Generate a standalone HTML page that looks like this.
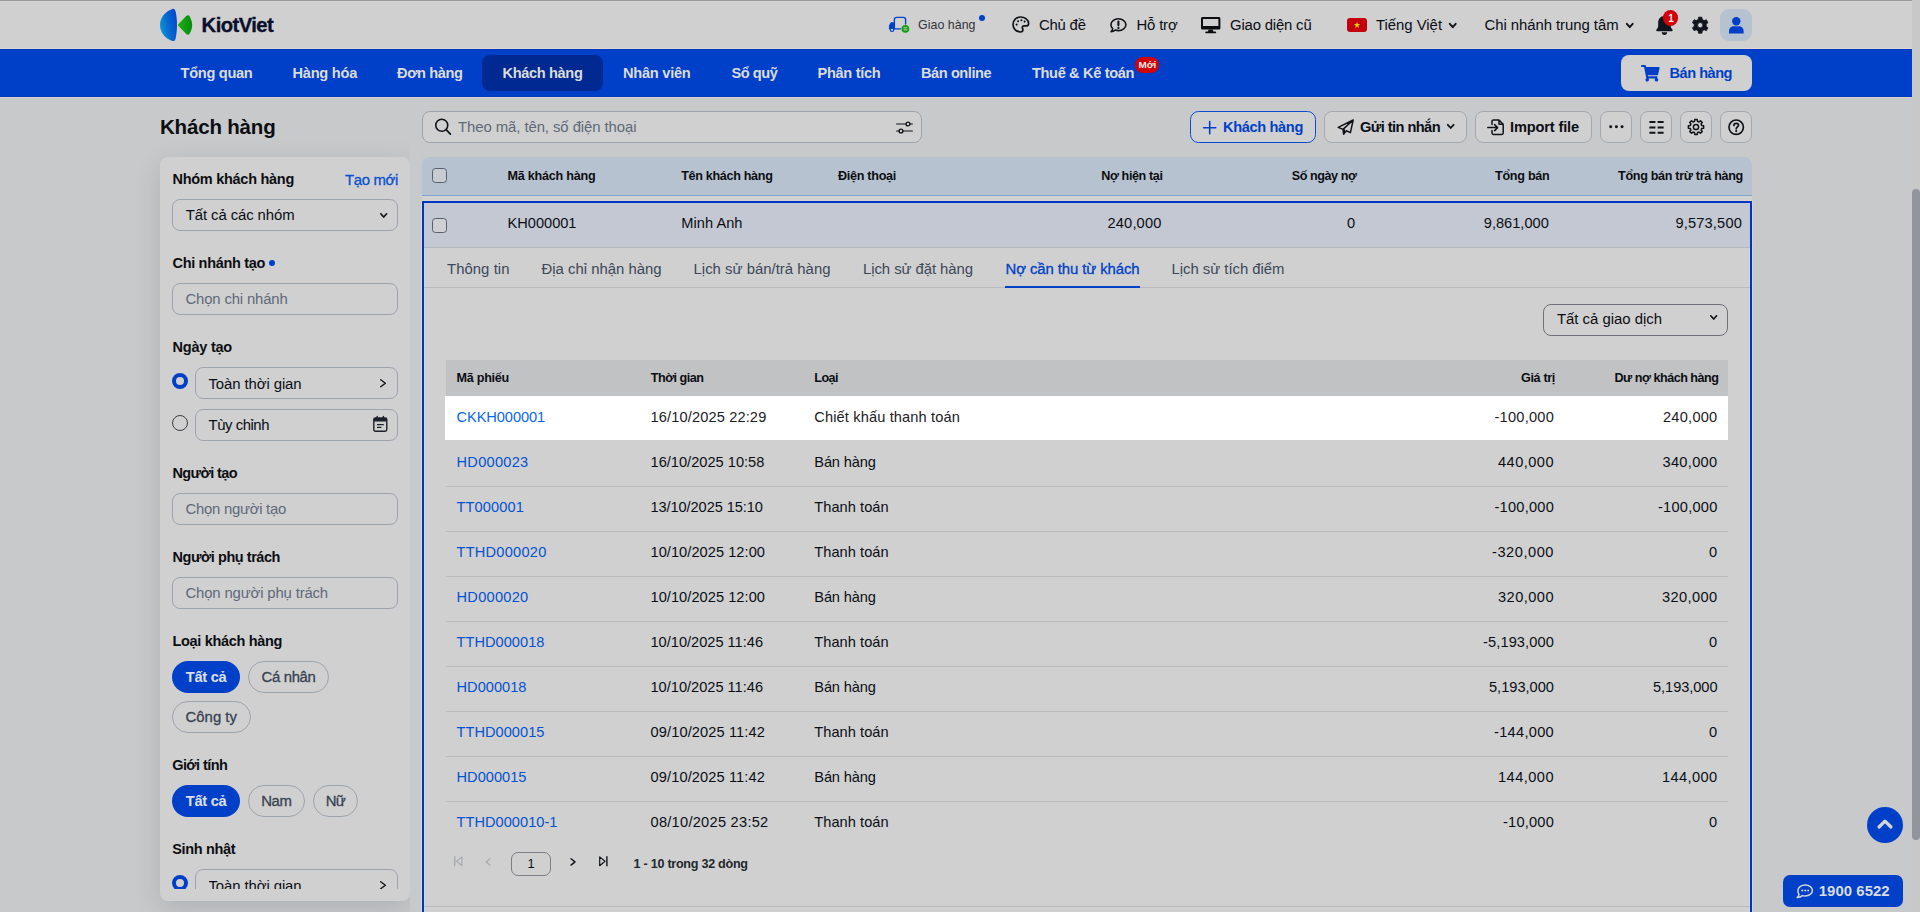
<!DOCTYPE html>
<html lang="vi"><head><meta charset="utf-8"><title>Khách hàng - KiotViet</title>
<style>
*{box-sizing:border-box;margin:0;padding:0}
html,body{width:1920px;height:912px;overflow:hidden;background:#c8c9cb;font-family:"Liberation Sans",sans-serif}
#root{position:relative;width:1920px;height:912px;overflow:hidden}
#root div,#root .t,#root svg{position:absolute}
.t{white-space:nowrap;line-height:20px;height:20px;font-weight:400;text-decoration:none;display:block}
.box{border:1px solid #9ea4ae;border-radius:8px;background:#d0d0d0}
.pill{border:1px solid #9ea4ae;border-radius:16px;background:#d0d0d0}
.pillon{border-radius:16px;background:#0040c8}
.btn{border:1px solid #a5a8ae;border-radius:8px;background:#d0d0d0;top:111px;height:32px}
.ln{height:1px;background:#b8babe}
svg{overflow:visible}

</style></head><body>
<div id="root">
<header>
<div style="left:0;top:0;width:1912px;height:49px;background:#d0d0d0"></div>
<div style="left:0;top:0;width:1920px;height:1px;background:#999b9a"></div>
<div style="left:0;top:1px;width:1912px;height:1px;background:#d4d4d4"></div>
<div style="left:1720px;top:9px;width:32px;height:32px;border-radius:9px;background:#b6c2d0"></div>
<div style="left:1347px;top:18px;width:20px;height:14px;border-radius:3px;background:#c4000f"></div>
<div style="left:979px;top:15px;width:6px;height:6px;border-radius:3px;background:#0040c8"></div>
<svg style="left:160px;top:8px" width="33" height="34" viewBox="0 0 33 34"><defs><linearGradient id="lg1" x1="0" x2="1" y1="0.7" y2="0.3"><stop offset="0" stop-color="#0d98d4"/><stop offset="0.55" stop-color="#0763cf"/><stop offset="1" stop-color="#0348cc"/></linearGradient><linearGradient id="lg2" x1="0" x2="1" y1="0" y2="0"><stop offset="0" stop-color="#1fb00c"/><stop offset="1" stop-color="#078a12"/></linearGradient></defs>
<path d="M12.4,0.9 C14.2,0.4 15.2,1.8 15.6,3.6 C16.6,8 17,12.5 17,17 C17,21.5 16.6,26 15.6,30.4 C15.2,32.2 14.2,33.4 12.4,32.9 C6,31 0,25 0,17 C0,9 6,3 12.4,0.9 Z" fill="url(#lg1)"/>
<path d="M18.5,16 L26.2,8 C27.4,6.8 29,6.9 29.7,8.4 C31.3,11.4 32.2,14.2 32.2,17 C32.2,19.8 31.3,22.6 29.7,25.6 C29,27.1 27.4,27.2 26.2,26 L18.5,18 C17.9,17.4 17.9,16.6 18.5,16 Z" fill="url(#lg2)"/></svg>
<svg style="left:888px;top:16px" width="22" height="18" viewBox="0 0 22 18"><path d="M6.4,12.8 L6.4,3.6 C6.4,2.3 7.3,1.4 8.6,1.4 L15.4,1.4 C16.7,1.4 17.6,2.3 17.6,3.6 L17.6,8" fill="none" stroke="#0040c8" stroke-width="1.35" stroke-linecap="round"/>
<path d="M6.4,12.8 L12.5,12.8" fill="none" stroke="#0040c8" stroke-width="1.35" stroke-linecap="round"/>
<path d="M1.4,13 L1.4,9.8 L2.9,6.8 L6.2,6.8 L6.2,13 Z" fill="#0040c8" stroke="#0040c8" stroke-width="1" stroke-linejoin="round"/>
<circle cx="4" cy="13.8" r="1.7" fill="#d0d0d0" stroke="#0040c8" stroke-width="1.2"/>
<circle cx="17.4" cy="12.8" r="3.9" fill="#11a011"/><path d="M15.5,11.8 h3.8 M15.5,13.8 h3.8" stroke="#d0d0d0" stroke-width="0.9"/></svg>
<svg style="left:1012px;top:15.9px" width="18" height="17" viewBox="0 0 18 17"><path d="M8.6,1 C4.4,1 1,4.4 1,8.5 C1,12.6 4.4,16 8.6,16 C10,16 10.9,15 10.9,13.8 C10.9,12.9 10.3,12.4 10.3,11.6 C10.3,10.6 11.1,9.9 12.1,9.9 L13.9,9.9 C15.6,9.9 16.6,8.9 16.6,7.4 C16.6,3.8 12.9,1 8.6,1 Z" fill="none" stroke="#101318" stroke-width="1.7"/>
<circle cx="4.6" cy="8.6" r="1.05" fill="#101318"/><circle cx="6.1" cy="5.3" r="1.05" fill="#101318"/><circle cx="9.4" cy="4.2" r="1.05" fill="#101318"/><circle cx="12.6" cy="5.6" r="1.05" fill="#101318"/></svg>
<svg style="left:1110px;top:18px" width="17" height="15" viewBox="0 0 17 15"><path d="M8.4,0.8 C12.6,0.8 15.9,3.4 15.9,6.7 C15.9,10 12.6,12.6 8.4,12.6 C7.3,12.6 6.2,12.4 5.2,12.1 C4.2,12.9 2.7,13.6 1,13.7 C1.9,12.8 2.5,11.8 2.7,10.6 C1.5,9.5 0.9,8.2 0.9,6.7 C0.9,3.4 4.2,0.8 8.4,0.8 Z" fill="none" stroke="#101318" stroke-width="1.6" stroke-linejoin="round"/>
<path d="M8.4,3.5 L8.4,7.2" stroke="#101318" stroke-width="2.1" stroke-linecap="round"/><circle cx="8.4" cy="9.9" r="1.15" fill="#101318"/></svg>
<svg style="left:1201px;top:16.7px" width="19.4" height="16.2" viewBox="0 0 19.4 16.2"><path d="M1.6,0 L17.8,0 C18.7,0 19.4,0.7 19.4,1.6 L19.4,11 C19.4,11.9 18.7,12.6 17.8,12.6 L1.6,12.6 C0.7,12.6 0,11.9 0,11 L0,1.6 C0,0.7 0.7,0 1.6,0 Z M2,2 L2,8.9 L17.4,8.9 L17.4,2 Z" fill="#0a0c10" fill-rule="evenodd"/>
<path d="M7.6,12.6 L11.8,12.6 L12.4,14.6 L14.4,14.6 C14.9,14.6 15.2,14.9 15.2,15.4 C15.2,15.9 14.9,16.2 14.4,16.2 L5,16.2 C4.5,16.2 4.2,15.9 4.2,15.4 C4.2,14.9 4.5,14.6 5,14.6 L7,14.6 Z" fill="#0a0c10"/></svg>
<svg style="left:1347px;top:18px" width="20" height="14" viewBox="0 0 20 14"><polygon points="10.00,3.80 10.79,6.11 13.23,6.15 11.28,7.62 12.00,9.95 10.00,8.55 8.00,9.95 8.72,7.62 6.77,6.15 9.21,6.11" fill="#dcd400"/></svg>
<svg style="left:1449.3px;top:22.8px" width="7.5" height="5.2" viewBox="0 0 7.5 5.2"><path d="M0.8,0.8 L3.75,4.2 L6.7,0.8" fill="none" stroke="#101318" stroke-width="1.9" stroke-linecap="round" stroke-linejoin="round"/></svg>
<svg style="left:1626px;top:22.8px" width="7.5" height="5.2" viewBox="0 0 7.5 5.2"><path d="M0.8,0.8 L3.75,4.2 L6.7,0.8" fill="none" stroke="#101318" stroke-width="1.9" stroke-linecap="round" stroke-linejoin="round"/></svg>
<svg style="left:1655.6px;top:15.9px" width="17" height="19.2" viewBox="0 0 17 19.2"><path d="M8.45,0 C4.3,0 2.2,3.2 2.2,7 L2.2,9.5 C2.2,11.5 1.4,12.6 0.5,13.5 C-0.2,14.2 0.3,15.2 1.2,15.2 L15.7,15.2 C16.6,15.2 17.1,14.2 16.4,13.5 C15.5,12.6 14.7,11.5 14.7,9.5 L14.7,7 C14.7,3.2 12.6,0 8.45,0 Z M5.65,16.3 L11.25,16.3 C11.25,17.9 10,19.1 8.45,19.1 C6.9,19.1 5.65,17.9 5.65,16.3 Z" fill="#10151d"/></svg>
<div style="left:1662.7px;top:10.1px;width:15.6px;height:15.6px;border-radius:8px;background:#d20008"></div>
<svg style="left:1691.8px;top:16.8px" width="16.4" height="16.4" viewBox="0 0 16.4 16.4"><path d="M6.25,2.42 L6.50,0.18 L9.90,0.18 L10.15,2.42 L12.23,3.62 L14.29,2.71 L16.00,5.67 L14.18,6.99 L14.18,9.41 L16.00,10.73 L14.29,13.69 L12.23,12.78 L10.15,13.98 L9.90,16.22 L6.50,16.22 L6.25,13.98 L4.17,12.78 L2.11,13.69 L0.40,10.73 L2.22,9.41 L2.22,6.99 L0.40,5.67 L2.11,2.71 L4.17,3.62Z M8.2,5.6 A2.6,2.6 0 1,0 8.2,10.8 A2.6,2.6 0 1,0 8.2,5.6 Z" fill="#10151d" fill-rule="evenodd" stroke="#10151d" stroke-width="0.8" stroke-linejoin="round"/></svg>
<svg style="left:1728.8px;top:16.6px" width="14.6" height="16.6" viewBox="0 0 14.6 16.6"><circle cx="7.3" cy="4.3" r="4.2" fill="#0040c8"/><path d="M0,16.4 L0,14 C0,11.3 2.2,9.3 4.8,9.3 L9.8,9.3 C12.4,9.3 14.6,11.3 14.6,14 L14.6,16.4 Z" fill="#0040c8"/></svg>
<span class="t" style="left:201.60px;top:15.01px;font-size:20.2px;color:#0a0f2c;font-weight:700;-webkit-text-stroke:0.35px #0a0f2c;letter-spacing:-0.538px;">KiotViet</span>
<span class="t" style="left:918.00px;top:15.02px;font-size:12.4px;color:#30343b;letter-spacing:0.035px;">Giao hàng</span>
<span class="t" style="left:1039.00px;top:15.01px;font-size:14.9px;color:#0b0e15;letter-spacing:-0.214px;">Chủ đề</span>
<span class="t" style="left:1136.50px;top:15.01px;font-size:14.9px;color:#0b0e15;letter-spacing:-0.174px;">Hỗ trợ</span>
<span class="t" style="left:1230.00px;top:15.01px;font-size:14.9px;color:#0b0e15;letter-spacing:-0.176px;">Giao diện cũ</span>
<span class="t" style="left:1376.00px;top:15.01px;font-size:14.9px;color:#0b0e15;letter-spacing:-0.023px;">Tiếng Việt</span>
<span class="t" style="left:1484.50px;top:15.01px;font-size:14.9px;color:#0b0e15;letter-spacing:-0.049px;">Chi nhánh trung tâm</span>
<span class="t" style="left:1668.20px;top:9.00px;font-size:10px;color:#ececec;font-weight:700;letter-spacing:-0.763px;">1</span>
</header>
<nav>
<div style="left:0;top:48px;width:1912px;height:1px;background:#dcd9d2"></div>
<div style="left:0;top:49px;width:1912px;height:48px;background:#0040c8;border-top:1px solid #0036c2;border-bottom:1px solid #0036c2"></div>
<div style="left:0;top:97px;width:1912px;height:1px;background:#d6d3cb"></div>
<div style="left:482px;top:55px;width:121px;height:36px;border-radius:8px;background:#002a92"></div>
<div style="left:1621px;top:55px;width:131px;height:36px;border-radius:8px;background:#d0d0d0"></div>
<div style="left:1135px;top:57px;width:24px;height:16px;border-radius:8px;background:#d20004"></div>
<svg style="left:1640.8px;top:64.8px" width="18.6" height="16.5" viewBox="0 0 576 512"><path d="M528.12 301.319l47.273-208C578.806 78.301 567.391 64 551.99 64H159.208l-9.166-44.81C147.758 8.021 137.93 0 126.529 0H24C10.745 0 0 10.745 0 24v16c0 13.255 10.745 24 24 24h69.883l70.248 343.435C147.325 417.1 136 435.222 136 456c0 30.928 25.072 56 56 56s56-25.072 56-56c0-15.674-6.447-29.835-16.824-40h209.647C430.447 426.165 424 440.326 424 456c0 30.928 25.072 56 56 56s56-25.072 56-56c0-22.172-12.888-41.332-31.579-50.405l5.517-24.276c3.413-15.018-8.002-29.319-23.403-29.319H218.117l-6.545-32h293.145c11.206 0 20.92-7.754 23.403-18.681z" fill="#0040c8"/></svg>
<a class="t" style="left:180.50px;top:63.00px;font-size:14.6px;color:#dcdcde;font-weight:700;letter-spacing:-0.286px;">Tổng quan</a>
<a class="t" style="left:292.50px;top:63.00px;font-size:14.6px;color:#dcdcde;font-weight:700;letter-spacing:-0.248px;">Hàng hóa</a>
<a class="t" style="left:397.00px;top:63.00px;font-size:14.6px;color:#dcdcde;font-weight:700;letter-spacing:-0.406px;">Đơn hàng</a>
<a class="t" style="left:502.50px;top:63.00px;font-size:14.6px;color:#dcdcde;font-weight:700;letter-spacing:-0.352px;">Khách hàng</a>
<a class="t" style="left:623.00px;top:63.00px;font-size:14.6px;color:#dcdcde;font-weight:700;letter-spacing:-0.250px;">Nhân viên</a>
<a class="t" style="left:731.50px;top:63.00px;font-size:14.6px;color:#dcdcde;font-weight:700;letter-spacing:-0.443px;">Sổ quỹ</a>
<a class="t" style="left:817.50px;top:63.00px;font-size:14.6px;color:#dcdcde;font-weight:700;letter-spacing:-0.299px;">Phân tích</a>
<a class="t" style="left:921.00px;top:63.00px;font-size:14.6px;color:#dcdcde;font-weight:700;letter-spacing:-0.434px;">Bán online</a>
<a class="t" style="left:1032.00px;top:63.00px;font-size:14.6px;color:#dcdcde;font-weight:700;letter-spacing:-0.359px;">Thuế &amp; Kế toán</a>
<a class="t" style="left:1669.50px;top:63.00px;font-size:14.6px;color:#0040c8;font-weight:700;letter-spacing:-0.498px;">Bán hàng</a>
<a class="t" style="left:1138.60px;top:55.01px;font-size:9.9px;color:#ececec;font-weight:700;letter-spacing:-0.167px;">Mới</a>
</nav>
<section class="toolbar">
<div class="box" style="left:422px;top:111px;width:500px;height:32px;background:#d0d0d0"></div>
<div style="left:1190px;top:111px;width:126px;height:32px;border:1.3px solid #0a4bd2;border-radius:8.5px;background:#d0d0d0"></div>
<div class="btn" style="left:1324px;width:143px"></div>
<div class="btn" style="left:1475px;width:117px"></div>
<div class="btn" style="left:1600px;width:32px"></div>
<div class="btn" style="left:1640px;width:32px"></div>
<div class="btn" style="left:1680px;width:32px"></div>
<div class="btn" style="left:1720px;width:32px"></div>
<svg style="left:434px;top:118px" width="18" height="18" viewBox="0 0 18 18"><circle cx="7.75" cy="7.25" r="6" fill="none" stroke="#101318" stroke-width="1.6"/><path d="M12.1,11.7 L16.4,16.1" stroke="#101318" stroke-width="1.7" stroke-linecap="round"/></svg>
<svg style="left:895.5px;top:120.5px" width="17.5" height="13" viewBox="0 0 17.5 13"><path d="M0.6,3 H10 M14,3 H16.4 M0.6,10 H3 M7,10 H16.4" stroke="#101318" stroke-width="1.15" stroke-linecap="round"/><circle cx="12" cy="3" r="1.9" fill="none" stroke="#101318" stroke-width="1.4"/><circle cx="5" cy="10" r="1.9" fill="none" stroke="#101318" stroke-width="1.4"/></svg>
<svg style="left:1203px;top:120.5px" width="13.4" height="13.4" viewBox="0 0 13.4 13.4"><path d="M6.7,0.6 V12.8 M0.6,6.7 H12.8" stroke="#0040c8" stroke-width="1.6" stroke-linecap="round"/></svg>
<svg style="left:1336.5px;top:118.5px" width="17.5" height="16.5" viewBox="0 0 17.5 16.5"><path d="M16.2,1 L1.2,8.4 L6,10.4 L6.6,15.2 L9.4,11.8 L13.4,13.6 Z M6,10.4 L16.2,1 M6.6,15.2 L7.4,11" fill="none" stroke="#101318" stroke-width="1.5" stroke-linejoin="round" stroke-linecap="round"/></svg>
<svg style="left:1446.5px;top:124.4px" width="7.4" height="5" viewBox="0 0 7.4 5"><path d="M0.8,0.8 L3.7,4 L6.6000000000000005,0.8" fill="none" stroke="#101318" stroke-width="1.8" stroke-linecap="round" stroke-linejoin="round"/></svg>
<svg style="left:1487px;top:118.7px" width="17.5" height="16.5" viewBox="0 0 17.5 16.5"><path d="M5,5.6 V2.4 C5,1.6 5.6,1 6.4,1 H12 L16.2,5.2 V14 C16.2,14.8 15.6,15.4 14.8,15.4 H6.4 C5.6,15.4 5,14.8 5,14 V11.6 M12,1 V5.2 H16.2" fill="none" stroke="#101318" stroke-width="1.5" stroke-linejoin="round" stroke-linecap="round"/><path d="M0.8,8.6 H10.6 M7.6,5.6 L10.6,8.6 L7.6,11.6" fill="none" stroke="#101318" stroke-width="1.5" stroke-linejoin="round" stroke-linecap="round"/></svg>
<svg style="left:1608.6px;top:125.3px" width="15" height="3.4" viewBox="0 0 15 3.4"><circle cx="1.7" cy="1.7" r="1.5" fill="#101318"/><circle cx="7.4" cy="1.7" r="1.5" fill="#101318"/><circle cx="13.1" cy="1.7" r="1.5" fill="#101318"/></svg>
<svg style="left:1648.5px;top:120.6px" width="15" height="12.8" viewBox="0 0 15 12.8"><path d="M0.4,1.1 H6.4 M8.6,1.1 H14.6 M0.4,6.4 H6.4 M8.6,6.4 H14.6 M0.4,11.7 H6.4 M8.6,11.7 H14.6" stroke="#101318" stroke-width="2"/></svg>
<svg style="left:1688px;top:118.7px" width="16" height="16" viewBox="0 0 16 16"><path d="M6.58,2.27 L6.80,0.39 L9.20,0.39 L9.42,2.27 L11.04,2.95 L12.53,1.77 L14.23,3.47 L13.05,4.96 L13.73,6.58 L15.61,6.80 L15.61,9.20 L13.73,9.42 L13.05,11.04 L14.23,12.53 L12.53,14.23 L11.04,13.05 L9.42,13.73 L9.20,15.61 L6.80,15.61 L6.58,13.73 L4.96,13.05 L3.47,14.23 L1.77,12.53 L2.95,11.04 L2.27,9.42 L0.39,9.20 L0.39,6.80 L2.27,6.58 L2.95,4.96 L1.77,3.47 L3.47,1.77 L4.96,2.95Z" fill="none" stroke="#101318" stroke-width="1.5" stroke-linejoin="round"/><circle cx="8" cy="8" r="2.6" fill="none" stroke="#101318" stroke-width="1.5"/></svg>
<svg style="left:1727.6px;top:119px" width="16.4" height="16.4" viewBox="0 0 16.4 16.4"><circle cx="8.2" cy="8.2" r="7.2" fill="none" stroke="#101318" stroke-width="1.7"/><path d="M5.9,6.5 C5.9,5.1 6.9,4.3 8.2,4.3 C9.5,4.3 10.5,5.1 10.5,6.3 C10.5,7.9 8.2,8 8.2,9.8" fill="none" stroke="#101318" stroke-width="1.7" stroke-linecap="round"/><circle cx="8.2" cy="12.1" r="1.05" fill="#101318"/></svg>
<h1 class="t" style="left:160.00px;top:117.01px;font-size:20.5px;color:#0c0e12;font-weight:700;letter-spacing:-0.183px;">Khách hàng</h1>
<span class="t" style="left:458.00px;top:117.01px;font-size:14.9px;color:#5f697a;letter-spacing:-0.073px;">Theo mã, tên, số điện thoại</span>
<span class="t" style="left:1223.00px;top:117.00px;font-size:14.6px;color:#0040c8;font-weight:700;letter-spacing:-0.352px;">Khách hàng</span>
<span class="t" style="left:1360.00px;top:117.00px;font-size:14.6px;color:#0b0e15;font-weight:700;letter-spacing:-0.565px;">Gửi tin nhắn</span>
<span class="t" style="left:1510.00px;top:117.00px;font-size:14.6px;color:#0b0e15;font-weight:700;letter-spacing:-0.141px;">Import file</span>
</section>
<aside>
<div style="left:160px;top:157px;width:250px;height:744px;border-radius:8px;background:#d0d0d0;box-shadow:0 8px 28px rgba(0,0,15,0.125)"></div>
<div class="box" style="left:172px;top:199px;width:226px;height:32px"></div>
<div class="box" style="left:172px;top:283px;width:226px;height:32px"></div>
<div class="box" style="left:195px;top:367px;width:203px;height:32px"></div>
<div class="box" style="left:195px;top:409px;width:203px;height:32px"></div>
<div class="box" style="left:172px;top:493px;width:226px;height:32px"></div>
<div class="box" style="left:172px;top:577px;width:226px;height:32px"></div>
<div class="pillon" style="left:172px;top:661px;width:68px;height:32px"></div>
<div class="pill" style="left:248px;top:661px;width:81px;height:32px"></div>
<div class="pill" style="left:172px;top:701px;width:79px;height:32px"></div>
<div class="pillon" style="left:172px;top:785px;width:68px;height:32px"></div>
<div class="pill" style="left:248px;top:785px;width:57px;height:32px"></div>
<div class="pill" style="left:313px;top:785px;width:45px;height:32px"></div>
<div style="left:172px;top:869px;width:226px;height:20px;overflow:hidden"><div class="box" style="left:23px;top:0;width:203px;height:32px"></div>
<div style="left:0;top:6px;width:16px;height:16px;border-radius:8px;border:4.5px solid #0040c8;background:#d0d0d0"></div></div>
<div style="left:272px;top:260px;width:0;height:0"></div>
<div style="left:269px;top:260px;width:6px;height:6px;border-radius:3px;background:#0040c8"></div>
<div style="left:172px;top:373px;width:16px;height:16px;border-radius:8px;border:4.5px solid #0040c8;background:#d0d0d0"></div>
<div style="left:172px;top:415px;width:16px;height:16px;border-radius:8px;border:1px solid #3c4047;background:#d0d0d0"></div>
<svg style="left:380px;top:212.6px" width="7.4" height="5" viewBox="0 0 7.4 5"><path d="M0.8,0.8 L3.7,4 L6.6000000000000005,0.8" fill="none" stroke="#101318" stroke-width="1.7" stroke-linecap="round" stroke-linejoin="round"/></svg>
<svg style="left:380.2px;top:378.6px" width="6.4" height="8.4" viewBox="0 0 6.4 8.4"><path d="M0.7,0.7 L5.4,4.2 L0.7,7.7" fill="none" stroke="#101318" stroke-width="1.4" stroke-linecap="round" stroke-linejoin="round"/></svg>
<div style="left:378px;top:869px;width:12px;height:20px;overflow:hidden"><svg style="left:2.2px;top:11.6px" width="6.4" height="8.4" viewBox="0 0 6.4 8.4"><path d="M0.7,0.7 L5.4,4.2 L0.7,7.7" fill="none" stroke="#101318" stroke-width="1.4" stroke-linecap="round" stroke-linejoin="round"/></svg></div>
<svg style="left:373px;top:416px" width="14.6" height="16" viewBox="0 0 14.6 16"><rect x="0.8" y="2" width="13" height="13.2" rx="1.6" fill="none" stroke="#1c212a" stroke-width="1.4"/><path d="M0.8,3.6 C0.8,2.7 1.5,2 2.4,2 H12.2 C13.1,2 13.8,2.7 13.8,3.6 V5.6 H0.8 Z" fill="#1c212a"/><path d="M4.2,0.4 V2.4 M10.4,0.4 V2.4" stroke="#1c212a" stroke-width="1.4" stroke-linecap="round"/><path d="M4,8.6 H10.8 M4,11.4 H8.4" stroke="#1c212a" stroke-width="1.3"/></svg>
<label class="t" style="left:172.50px;top:169.01px;font-size:14.5px;color:#0c0e12;font-weight:700;letter-spacing:-0.279px;">Nhóm khách hàng</label>
<a class="t" style="left:345.00px;top:170.01px;font-size:14.9px;color:#0a50d2;-webkit-text-stroke:0.3px #0a50d2;letter-spacing:-0.326px;">Tạo mới</a>
<span class="t" style="left:185.75px;top:205.01px;font-size:14.9px;color:#0b0e15;letter-spacing:-0.089px;">Tất cả các nhóm</span>
<label class="t" style="left:172.50px;top:253.01px;font-size:14.5px;color:#0c0e12;font-weight:700;letter-spacing:-0.321px;">Chi nhánh tạo</label>
<span class="t" style="left:185.50px;top:289.01px;font-size:14.9px;color:#5f697a;letter-spacing:-0.166px;">Chọn chi nhánh</span>
<label class="t" style="left:172.50px;top:337.01px;font-size:14.5px;color:#0c0e12;font-weight:700;letter-spacing:-0.219px;">Ngày tạo</label>
<span class="t" style="left:208.50px;top:374.01px;font-size:14.9px;color:#0b0e15;letter-spacing:-0.087px;">Toàn thời gian</span>
<span class="t" style="left:208.50px;top:415.01px;font-size:14.9px;color:#0b0e15;letter-spacing:-0.451px;">Tùy chỉnh</span>
<label class="t" style="left:172.50px;top:463.01px;font-size:14.5px;color:#0c0e12;font-weight:700;letter-spacing:-0.606px;">Người tạo</label>
<span class="t" style="left:185.50px;top:499.01px;font-size:14.9px;color:#5f697a;letter-spacing:-0.263px;">Chọn người tạo</span>
<label class="t" style="left:172.50px;top:547.01px;font-size:14.5px;color:#0c0e12;font-weight:700;letter-spacing:-0.451px;">Người phụ trách</label>
<span class="t" style="left:185.50px;top:583.01px;font-size:14.9px;color:#5f697a;letter-spacing:-0.153px;">Chọn người phụ trách</span>
<label class="t" style="left:172.50px;top:631.01px;font-size:14.5px;color:#0c0e12;font-weight:700;letter-spacing:-0.328px;">Loại khách hàng</label>
<span class="t" style="left:185.75px;top:667.00px;font-size:14.6px;color:#dde0e8;font-weight:700;letter-spacing:-0.240px;">Tất cả</span>
<span class="t" style="left:261.50px;top:667.01px;font-size:14.9px;color:#384252;-webkit-text-stroke:0.3px #384252;letter-spacing:-0.330px;">Cá nhân</span>
<span class="t" style="left:185.50px;top:707.01px;font-size:14.9px;color:#384252;-webkit-text-stroke:0.3px #384252;letter-spacing:0.025px;">Công ty</span>
<label class="t" style="left:172.20px;top:755.01px;font-size:14.5px;color:#0c0e12;font-weight:700;letter-spacing:-0.572px;">Giới tính</label>
<span class="t" style="left:185.75px;top:791.00px;font-size:14.6px;color:#dde0e8;font-weight:700;letter-spacing:-0.240px;">Tất cả</span>
<span class="t" style="left:261.20px;top:791.01px;font-size:14.9px;color:#384252;-webkit-text-stroke:0.3px #384252;letter-spacing:-0.418px;">Nam</span>
<span class="t" style="left:325.70px;top:791.01px;font-size:14.9px;color:#384252;-webkit-text-stroke:0.3px #384252;letter-spacing:-0.717px;">Nữ</span>
<label class="t" style="left:172.20px;top:839.01px;font-size:14.5px;color:#0c0e12;font-weight:700;letter-spacing:-0.340px;">Sinh nhật</label>
<span class="t" style="left:208.50px;top:876.01px;font-size:14.9px;color:#0b0e15;letter-spacing:-0.087px;height:12.99px;overflow:hidden;">Toàn thời gian</span>
</aside>
<main>
<div style="left:410px;top:98px;width:12px;height:814px;background:#c8c9cb"></div>
<div style="left:422px;top:196px;width:1330px;height:6px;background:#d1d1d1"></div>
<div style="left:422px;top:157px;width:1330px;height:39px;border-radius:8px 8px 0 0;background:#b6c2d0;border-bottom:1px solid #83a3cf"></div>
<div style="left:422px;top:201px;width:1330px;height:740px;border:2px solid #0033c4;box-shadow:0 0 0 1px #d6d4cd, inset 0 0 0 1px #d6d5d0;background:#d0d0d0"></div>
<div style="left:424px;top:203px;width:1326px;height:44px;background:#c4c8d2"></div>
<div class="ln" style="left:424px;top:247px;width:1326px;background:#b6b8be"></div>
<div class="ln" style="left:424px;top:287px;width:1326px"></div>
<div style="left:1005px;top:286px;width:135px;height:2px;background:#0040c8"></div>
<div class="box" style="left:1543px;top:304px;width:185px;height:32px;border-color:#6f7278"></div>
<div style="left:446px;top:360px;width:1282px;height:36px;background:#c1c2c4"></div>
<div style="left:445px;top:396px;width:1283px;height:44px;background:#ffffff"></div>
<div class="ln" style="left:446px;top:486px;width:1282px"></div>
<div class="ln" style="left:446px;top:531px;width:1282px"></div>
<div class="ln" style="left:446px;top:576px;width:1282px"></div>
<div class="ln" style="left:446px;top:621px;width:1282px"></div>
<div class="ln" style="left:446px;top:666px;width:1282px"></div>
<div class="ln" style="left:446px;top:711px;width:1282px"></div>
<div class="ln" style="left:446px;top:756px;width:1282px"></div>
<div class="ln" style="left:446px;top:801px;width:1282px"></div>
<div class="ln" style="left:424px;top:906px;width:1326px"></div>
<div style="left:511px;top:852px;width:40px;height:24px;border:1px solid #7b7e85;border-radius:7px"></div>
<div style="left:432px;top:168px;width:15px;height:15px;border:1.5px solid #56606c;border-radius:3.5px;background:#c7cbd2"></div>
<div style="left:432px;top:218px;width:15px;height:15px;border:1.5px solid #56606c;border-radius:3.5px;background:#cfd0d4"></div>
<svg style="left:1710px;top:315.4px" width="7.4" height="5" viewBox="0 0 7.4 5"><path d="M0.8,0.8 L3.7,4 L6.6000000000000005,0.8" fill="none" stroke="#101318" stroke-width="1.7" stroke-linecap="round" stroke-linejoin="round"/></svg>
<svg style="left:454px;top:856.3px" width="8.6" height="10.6" viewBox="0 0 8.6 10.6"><path d="M0.7,0.3 V10.3" stroke="#a9abb0" stroke-width="1.4"/><path d="M7.9,0.9 L2.6,5.3 L7.9,9.7 Z" fill="none" stroke="#a9abb0" stroke-width="1.2" stroke-linejoin="round"/></svg>
<svg style="left:485.3px;top:857.6px" width="6" height="7.8" viewBox="0 0 6 7.8"><path d="M5,0.7 L1,3.9 L5,7.1" fill="none" stroke="#a9abb0" stroke-width="1.3" stroke-linecap="round" stroke-linejoin="round"/></svg>
<svg style="left:570.4px;top:857.6px" width="6" height="7.8" viewBox="0 0 6 7.8"><path d="M1,0.7 L5,3.9 L1,7.1" fill="none" stroke="#101318" stroke-width="1.4" stroke-linecap="round" stroke-linejoin="round"/></svg>
<svg style="left:599.4px;top:856.3px" width="8.6" height="10.6" viewBox="0 0 8.6 10.6"><path d="M7.9,0.3 V10.3" stroke="#101318" stroke-width="1.4"/><path d="M0.7,0.9 L6,5.3 L0.7,9.7 Z" fill="none" stroke="#101318" stroke-width="1.2" stroke-linejoin="round"/></svg>
<span class="t" style="left:507.50px;top:166.01px;font-size:12.6px;color:#0c0e12;font-weight:700;letter-spacing:-0.230px;">Mã khách hàng</span>
<span class="t" style="left:681.25px;top:166.01px;font-size:12.6px;color:#0c0e12;font-weight:700;letter-spacing:-0.330px;">Tên khách hàng</span>
<span class="t" style="left:838.00px;top:166.01px;font-size:12.6px;color:#0c0e12;font-weight:700;letter-spacing:-0.287px;">Điện thoại</span>
<span class="t" style="left:1101.25px;top:166.01px;font-size:12.6px;color:#0c0e12;font-weight:700;letter-spacing:-0.399px;">Nợ hiện tại</span>
<span class="t" style="left:1291.80px;top:166.01px;font-size:12.6px;color:#0c0e12;font-weight:700;letter-spacing:-0.454px;">Số ngày nợ</span>
<span class="t" style="left:1495.00px;top:166.01px;font-size:12.6px;color:#0c0e12;font-weight:700;letter-spacing:-0.271px;">Tổng bán</span>
<span class="t" style="left:1618.00px;top:166.01px;font-size:12.6px;color:#0c0e12;font-weight:700;letter-spacing:-0.312px;">Tổng bán trừ trả hàng</span>
<span class="t" style="left:507.50px;top:213.00px;font-size:14.6px;color:#0b0e15;letter-spacing:0.002px;">KH000001</span>
<span class="t" style="left:681.25px;top:213.00px;font-size:14.6px;color:#0b0e15;letter-spacing:0.049px;">Minh Anh</span>
<span class="t" style="left:1107.50px;top:213.00px;font-size:14.6px;color:#0b0e15;letter-spacing:0.176px;">240,000</span>
<span class="t" style="left:1347.00px;top:213.00px;font-size:14.6px;color:#0b0e15;letter-spacing:0.475px;">0</span>
<span class="t" style="left:1483.80px;top:213.00px;font-size:14.6px;color:#0b0e15;letter-spacing:0.007px;">9,861,000</span>
<span class="t" style="left:1675.40px;top:213.00px;font-size:14.6px;color:#0b0e15;letter-spacing:0.185px;">9,573,500</span>
<span class="t" style="left:447.00px;top:259.01px;font-size:14.9px;color:#3d4858;letter-spacing:0.045px;">Thông tin</span>
<span class="t" style="left:541.50px;top:259.01px;font-size:14.9px;color:#3d4858;letter-spacing:-0.003px;">Địa chỉ nhận hàng</span>
<span class="t" style="left:693.50px;top:259.01px;font-size:14.9px;color:#3d4858;letter-spacing:0.018px;">Lịch sử bán/trả hàng</span>
<span class="t" style="left:863.00px;top:259.01px;font-size:14.9px;color:#3d4858;letter-spacing:-0.061px;">Lịch sử đặt hàng</span>
<span class="t" style="left:1005.50px;top:259.01px;font-size:14.9px;color:#0040c8;-webkit-text-stroke:0.3px #0040c8;letter-spacing:-0.086px;">Nợ cần thu từ khách</span>
<span class="t" style="left:1171.50px;top:259.01px;font-size:14.9px;color:#3d4858;letter-spacing:-0.025px;">Lịch sử tích điểm</span>
<span class="t" style="left:1557.00px;top:309.01px;font-size:14.9px;color:#0b0e15;letter-spacing:-0.008px;">Tất cả giao dịch</span>
<span class="t" style="left:456.50px;top:368.01px;font-size:12.6px;color:#0c0e12;font-weight:700;letter-spacing:-0.260px;">Mã phiếu</span>
<span class="t" style="left:650.80px;top:368.01px;font-size:12.6px;color:#0c0e12;font-weight:700;letter-spacing:-0.515px;">Thời gian</span>
<span class="t" style="left:814.30px;top:368.01px;font-size:12.6px;color:#0c0e12;font-weight:700;letter-spacing:-0.548px;">Loại</span>
<span class="t" style="left:1521.00px;top:368.01px;font-size:12.6px;color:#0c0e12;font-weight:700;letter-spacing:-0.344px;">Giá trị</span>
<span class="t" style="left:1614.50px;top:368.01px;font-size:12.6px;color:#0c0e12;font-weight:700;letter-spacing:-0.490px;">Dư nợ khách hàng</span>
<a class="t" style="left:456.50px;top:407.00px;font-size:14.6px;color:#0866f6;letter-spacing:-0.065px;">CKKH000001</a>
<span class="t" style="left:650.50px;top:407.00px;font-size:14.6px;color:#1c2026;letter-spacing:0.142px;">16/10/2025 22:29</span>
<span class="t" style="left:814.30px;top:407.00px;font-size:14.6px;color:#1c2026;letter-spacing:0.138px;">Chiết khấu thanh toán</span>
<span class="t" style="left:1494.50px;top:407.00px;font-size:14.6px;color:#1c2026;letter-spacing:0.234px;">-100,000</span>
<span class="t" style="left:1663.00px;top:407.00px;font-size:14.6px;color:#1c2026;letter-spacing:0.248px;">240,000</span>
<a class="t" style="left:456.50px;top:452.00px;font-size:14.6px;color:#0452d0;letter-spacing:0.277px;">HD000023</a>
<span class="t" style="left:650.50px;top:452.00px;font-size:14.6px;color:#0b0e15;letter-spacing:0.017px;">16/10/2025 10:58</span>
<span class="t" style="left:814.30px;top:452.00px;font-size:14.6px;color:#0b0e15;letter-spacing:-0.137px;">Bán hàng</span>
<span class="t" style="left:1498.00px;top:452.00px;font-size:14.6px;color:#0b0e15;letter-spacing:0.462px;">440,000</span>
<span class="t" style="left:1662.50px;top:452.00px;font-size:14.6px;color:#0b0e15;letter-spacing:0.319px;">340,000</span>
<a class="t" style="left:456.50px;top:497.00px;font-size:14.6px;color:#0452d0;letter-spacing:0.134px;">TT000001</a>
<span class="t" style="left:650.50px;top:497.00px;font-size:14.6px;color:#0b0e15;letter-spacing:-0.083px;">13/10/2025 15:10</span>
<span class="t" style="left:814.30px;top:497.00px;font-size:14.6px;color:#0b0e15;letter-spacing:0.056px;">Thanh toán</span>
<span class="t" style="left:1494.50px;top:497.00px;font-size:14.6px;color:#0b0e15;letter-spacing:0.234px;">-100,000</span>
<span class="t" style="left:1658.00px;top:497.00px;font-size:14.6px;color:#0b0e15;letter-spacing:0.234px;">-100,000</span>
<a class="t" style="left:456.50px;top:542.00px;font-size:14.6px;color:#0452d0;letter-spacing:0.239px;">TTHD000020</a>
<span class="t" style="left:650.50px;top:542.00px;font-size:14.6px;color:#0b0e15;letter-spacing:0.055px;">10/10/2025 12:00</span>
<span class="t" style="left:814.30px;top:542.00px;font-size:14.6px;color:#0b0e15;letter-spacing:0.056px;">Thanh toán</span>
<span class="t" style="left:1492.00px;top:542.00px;font-size:14.6px;color:#0b0e15;letter-spacing:0.547px;">-320,000</span>
<span class="t" style="left:1709.00px;top:542.00px;font-size:14.6px;color:#0b0e15;letter-spacing:0.375px;">0</span>
<a class="t" style="left:456.50px;top:587.00px;font-size:14.6px;color:#0452d0;letter-spacing:0.277px;">HD000020</a>
<span class="t" style="left:650.50px;top:587.00px;font-size:14.6px;color:#0b0e15;letter-spacing:0.055px;">10/10/2025 12:00</span>
<span class="t" style="left:814.30px;top:587.00px;font-size:14.6px;color:#0b0e15;letter-spacing:-0.137px;">Bán hàng</span>
<span class="t" style="left:1498.00px;top:587.00px;font-size:14.6px;color:#0b0e15;letter-spacing:0.462px;">320,000</span>
<span class="t" style="left:1662.00px;top:587.00px;font-size:14.6px;color:#0b0e15;letter-spacing:0.391px;">320,000</span>
<a class="t" style="left:456.50px;top:632.00px;font-size:14.6px;color:#0452d0;letter-spacing:0.039px;">TTHD000018</a>
<span class="t" style="left:650.50px;top:632.00px;font-size:14.6px;color:#0b0e15;letter-spacing:-0.002px;">10/10/2025 11:46</span>
<span class="t" style="left:814.30px;top:632.00px;font-size:14.6px;color:#0b0e15;letter-spacing:0.056px;">Thanh toán</span>
<span class="t" style="left:1483.00px;top:632.00px;font-size:14.6px;color:#0b0e15;letter-spacing:0.120px;">-5,193,000</span>
<span class="t" style="left:1709.00px;top:632.00px;font-size:14.6px;color:#0b0e15;letter-spacing:0.375px;">0</span>
<a class="t" style="left:456.50px;top:677.00px;font-size:14.6px;color:#0452d0;letter-spacing:0.027px;">HD000018</a>
<span class="t" style="left:650.50px;top:677.00px;font-size:14.6px;color:#0b0e15;letter-spacing:-0.002px;">10/10/2025 11:46</span>
<span class="t" style="left:814.30px;top:677.00px;font-size:14.6px;color:#0b0e15;letter-spacing:-0.137px;">Bán hàng</span>
<span class="t" style="left:1489.00px;top:677.00px;font-size:14.6px;color:#0b0e15;letter-spacing:0.007px;">5,193,000</span>
<span class="t" style="left:1653.00px;top:677.00px;font-size:14.6px;color:#0b0e15;letter-spacing:-0.049px;">5,193,000</span>
<a class="t" style="left:456.50px;top:722.00px;font-size:14.6px;color:#0452d0;letter-spacing:0.039px;">TTHD000015</a>
<span class="t" style="left:650.50px;top:722.00px;font-size:14.6px;color:#0b0e15;letter-spacing:0.123px;">09/10/2025 11:42</span>
<span class="t" style="left:814.30px;top:722.00px;font-size:14.6px;color:#0b0e15;letter-spacing:0.056px;">Thanh toán</span>
<span class="t" style="left:1494.00px;top:722.00px;font-size:14.6px;color:#0b0e15;letter-spacing:0.297px;">-144,000</span>
<span class="t" style="left:1709.00px;top:722.00px;font-size:14.6px;color:#0b0e15;letter-spacing:0.375px;">0</span>
<a class="t" style="left:456.50px;top:767.00px;font-size:14.6px;color:#0452d0;letter-spacing:0.027px;">HD000015</a>
<span class="t" style="left:650.50px;top:767.00px;font-size:14.6px;color:#0b0e15;letter-spacing:0.123px;">09/10/2025 11:42</span>
<span class="t" style="left:814.30px;top:767.00px;font-size:14.6px;color:#0b0e15;letter-spacing:-0.137px;">Bán hàng</span>
<span class="t" style="left:1498.00px;top:767.00px;font-size:14.6px;color:#0b0e15;letter-spacing:0.462px;">144,000</span>
<span class="t" style="left:1662.00px;top:767.00px;font-size:14.6px;color:#0b0e15;letter-spacing:0.391px;">144,000</span>
<a class="t" style="left:456.50px;top:812.00px;font-size:14.6px;color:#0452d0;letter-spacing:0.034px;">TTHD000010-1</a>
<span class="t" style="left:650.50px;top:812.00px;font-size:14.6px;color:#0b0e15;letter-spacing:0.273px;">08/10/2025 23:52</span>
<span class="t" style="left:814.30px;top:812.00px;font-size:14.6px;color:#0b0e15;letter-spacing:0.056px;">Thanh toán</span>
<span class="t" style="left:1503.00px;top:812.00px;font-size:14.6px;color:#0b0e15;letter-spacing:0.214px;">-10,000</span>
<span class="t" style="left:1709.00px;top:812.00px;font-size:14.6px;color:#0b0e15;letter-spacing:0.375px;">0</span>
<span class="t" style="left:527.50px;top:854.01px;font-size:12.8px;color:#0b0e15;letter-spacing:-0.125px;">1</span>
<span class="t" style="left:633.60px;top:854.01px;font-size:12.6px;color:#23272e;font-weight:700;letter-spacing:-0.273px;">1 - 10 trong 32 dòng</span>
</main>
<footer>
<div style="left:1867px;top:807px;width:36px;height:36px;border-radius:18px;background:#0040c8"></div>
<div style="left:1783px;top:875px;width:120px;height:32px;border-radius:7px;background:#0040c8"></div>
<svg style="left:1876px;top:816.5px" width="18" height="12" viewBox="0 0 18 12"><path d="M3,10 L9,4.2 L15,10" fill="none" stroke="#d6d6d6" stroke-width="3.2" stroke-linecap="round" stroke-linejoin="round"/></svg>
<svg style="left:1795.5px;top:883.5px" width="17.5" height="14.8" viewBox="0 0 17.5 14.8"><path d="M9.2,1 C13.2,1 16.4,3.4 16.4,6.5 C16.4,9.6 13.2,12 9.2,12 C8.2,12 7.2,11.9 6.3,11.6 C5.2,12.6 3.4,13.4 1.2,13.6 C2.2,12.7 2.8,11.6 3,10.4 C2.3,9.4 1.9,8 1.9,6.5 C1.9,3.4 5.2,1 9.2,1 Z" fill="none" stroke="#d6d6d6" stroke-width="1.5" stroke-linejoin="round"/><circle cx="6.2" cy="6.5" r="1" fill="#d6d6d6"/><circle cx="9.2" cy="6.5" r="1" fill="#d6d6d6"/><circle cx="12.2" cy="6.5" r="1" fill="#d6d6d6"/></svg>
<span class="t" style="left:1818.70px;top:881.01px;font-size:14.9px;color:#d9dce4;font-weight:700;letter-spacing:0.068px;">1900 6522</span>
</footer>
<!-- page scrollbar -->
<div style="left:1912px;top:0;width:8px;height:912px;background:#c8c8c8"></div>
<div style="left:1912px;top:189px;width:8px;height:651px;border-radius:4px;background:#92959e"></div>
</div>
</body></html>
